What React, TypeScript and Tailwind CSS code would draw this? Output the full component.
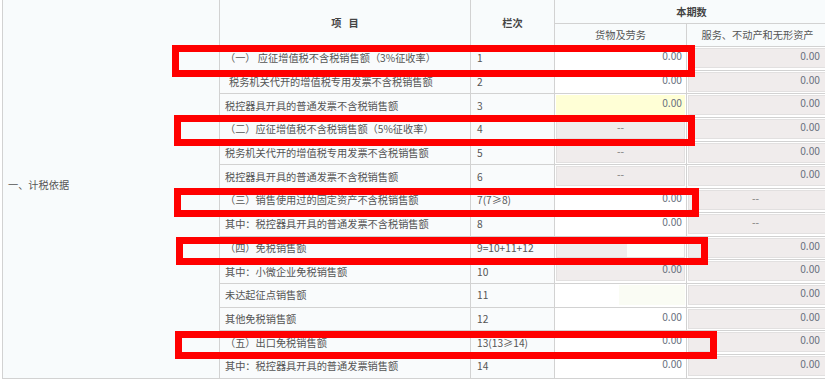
type Fill = "white" | "gray" | "yellow" | "split9" | "split11";

type Row = {
  item: string;
  no: string;
  indent?: boolean;
  goods: Fill;
  goodsText: string;
  svc: string;
};

const rows: Row[] = [
  { item: "（一） 应征增值税不含税销售额（3%征收率）", no: "1", goods: "white", goodsText: "0.00", svc: "0.00" },
  { item: "税务机关代开的增值税专用发票不含税销售额", no: "2", indent: true, goods: "white", goodsText: "0.00", svc: "0.00" },
  { item: "税控器具开具的普通发票不含税销售额", no: "3", goods: "yellow", goodsText: "0.00", svc: "0.00" },
  { item: "（二）应征增值税不含税销售额（5%征收率）", no: "4", goods: "gray", goodsText: "--", svc: "0.00" },
  { item: "税务机关代开的增值税专用发票不含税销售额", no: "5", goods: "gray", goodsText: "--", svc: "0.00" },
  { item: "税控器具开具的普通发票不含税销售额", no: "6", goods: "gray", goodsText: "--", svc: "0.00" },
  { item: "（三）销售使用过的固定资产不含税销售额", no: "7(7≥8)", goods: "white", goodsText: "0.00", svc: "--" },
  { item: "其中：税控器具开具的普通发票不含税销售额", no: "8", goods: "white", goodsText: "0.00", svc: "--" },
  { item: "（四）免税销售额", no: "9=10+11+12", goods: "split9", goodsText: "", svc: "0.00" },
  { item: "其中：小微企业免税销售额", no: "10", goods: "gray", goodsText: "0.00", svc: "0.00" },
  { item: "未达起征点销售额", no: "11", goods: "split11", goodsText: "", svc: "0.00" },
  { item: "其他免税销售额", no: "12", goods: "white", goodsText: "0.00", svc: "0.00" },
  { item: "（五）出口免税销售额", no: "13(13≥14)", goods: "white", goodsText: "0.00", svc: "0.00" },
  { item: "其中：税控器具开具的普通发票销售额", no: "14", goods: "white", goodsText: "0.00", svc: "0.00" },
];

// red annotation boxes drawn over the screenshot
const marks = [
  "left-[172px] top-[45px] w-[523px] h-[32px]",
  "left-[174px] top-[115px] w-[521px] h-[31px]",
  "left-[174px] top-[188px] w-[525px] h-[29px]",
  "left-[176px] top-[237px] w-[532px] h-[28px]",
  "left-[175px] top-[331px] w-[542px] h-[28px]",
];

function Value({ text }: { text: string }) {
  if (!text) return null;
  if (text === "--") {
    return <div className="text-center text-[#777]">--</div>;
  }
  return <div className="text-right pr-[2px] text-[#6a7180]">{text}</div>;
}

function GoodsCell({ fill, text }: { fill: Fill; text: string }) {
  if (fill === "split9") {
    return (
      <div className="flex h-[20px] border border-[#e2e0e0]">
        <div className="w-[70px] bg-[#f0ecec]" />
        <div className="flex-1 bg-[#fdfefb]" />
      </div>
    );
  }
  if (fill === "split11") {
    return (
      <div className="flex h-[20px]">
        <div className="w-[63px] bg-white" />
        <div className="flex-1 bg-[#fafcf4]" />
      </div>
    );
  }
  const bg =
    fill === "gray" ? "bg-[#f0ecec] border-[#e2e0e0]" : fill === "yellow" ? "bg-[#ffffd6] border-[#ffffd6]" : "bg-white border-white";
  return (
    <div className={`h-[20px] border ${bg} leading-[14px]`}>
      <Value text={text} />
    </div>
  );
}

export default function App() {
  const line = "border border-[#d2d2d2]";
  return (
    <div
      className="relative w-[825px] h-[381px] overflow-hidden bg-white text-[10.2px] text-[#555]"
      style={{ fontFamily: '"Noto Sans CJK SC", "Noto Sans", sans-serif' }}
    >
      <table className="table-fixed border-collapse ml-[2px] -mt-px w-[826px]">
        <colgroup>
          <col className="w-[217px]" />
          <col className="w-[251px]" />
          <col className="w-[84px]" />
          <col className="w-[132px]" />
          <col className="w-[142px]" />
        </colgroup>
        <tbody>
          <tr className="h-[24px]">
            <td rowSpan={16} className={`${line} bg-[#f8fbfc] pl-[5px] pb-[8px] align-middle`}>
              一、计税依据
            </td>
            <td rowSpan={2} className={`${line} bg-[#f8fbfc] text-center font-bold text-[#444]`}>
              项&nbsp;&nbsp;&nbsp;目
            </td>
            <td rowSpan={2} className={`${line} bg-[#f8fbfc] text-center font-bold text-[#444]`}>
              栏次
            </td>
            <td colSpan={2} className={`${line} bg-[#f8fbfc] text-center font-bold text-[#444]`}>
              本期数
            </td>
          </tr>
          <tr className="h-[23px]">
            <td className={`${line} bg-[#f8fbfc] text-center`}>货物及劳务</td>
            <td className={`${line} bg-[#f8fbfc] text-center`}>服务、不动产和无形资产</td>
          </tr>
          {rows.map((r) => (
            <tr key={r.no} className="h-[23.7px]">
              <td className={`${line} bg-[#f9fbfc] ${r.indent ? "pl-[9px]" : "pl-[5px]"} whitespace-nowrap leading-[14px]`}>
                {r.item}
              </td>
              <td className={`${line} bg-[#f9fbfc] pl-[6px] leading-[14px]`}>{r.no}</td>
              <td className={`${line} p-px align-top`}>
                <GoodsCell fill={r.goods} text={r.goodsText} />
              </td>
              <td className={`${line} p-px align-top`}>
                <div className="h-[20px] border border-[#e2e0e0] bg-[#f0ecec] leading-[14px] pr-[4px]">
                  <Value text={r.svc} />
                </div>
              </td>
            </tr>
          ))}
        </tbody>
      </table>

      {marks.map((m) => (
        <div key={m} className={`absolute ${m} border-[7px] border-[#ff0000]`} />
      ))}
    </div>
  );
}
